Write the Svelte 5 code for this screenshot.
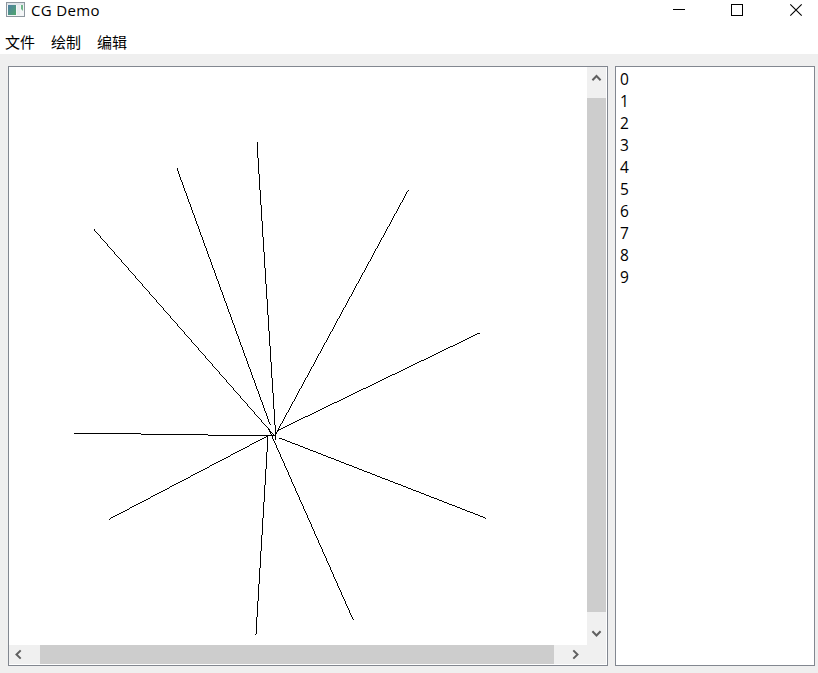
<script>
  const menus = ['文件', '绘制', '编辑'];
  const items = Array.from({ length: 10 }, (_, i) => i);

  // Segments in canvas coordinates: x1, y1, x2, y2
  const segments = [
    [248, 75, 266.95, 372],
    [168, 101, 261, 357],
    [85, 162, 266, 369],
    [399, 123, 266, 368],
    [470, 266, 269, 363],
    [476, 451, 270, 371],
    [344, 552, 260, 362],
    [246.95, 567, 259, 368],
    [100, 452, 260, 368],
    [65, 366, 266, 369]
  ];

  // DDA rasterisation keeps the strokes one pixel wide without smoothing
  function raster([x1, y1, x2, y2]) {
    const n = Math.max(Math.abs(x2 - x1), Math.abs(y2 - y1));
    let d = '';
    for (let i = 0; i <= n; i++) {
      const x = Math.floor(x1 + ((x2 - x1) * i) / n + 1e-9);
      const y = Math.floor(y1 + ((y2 - y1) * i) / n + 1e-9);
      d += `M${x} ${y}h1v1h-1z`;
    }
    return d;
  }
</script>

<div class="window">
  <header class="title">
    <svg class="logo" width="20" height="18" viewBox="0 0 20 18">
      <defs>
        <linearGradient id="pane" x1="0" y1="0" x2="1" y2="1">
          <stop offset="0" stop-color="#4f7fa5" />
          <stop offset="1" stop-color="#4fa66c" />
        </linearGradient>
      </defs>
      <rect x=".5" y=".5" width="18" height="14" fill="#f4f6f7" stroke="#8d969e" />
      <rect x="1" y="1" width="17" height="2" fill="#dfe5e9" />
      <rect x="2" y="3" width="8" height="10" fill="url(#pane)" />
      <rect x="11" y="3" width="3" height="10" fill="#e9edef" />
      <path d="M15 3h2v6l-2-2z" fill="#70b68a" />
    </svg>
    <span class="name">CG Demo</span>
    <svg class="controls" width="146" height="20" viewBox="0 0 146 20" fill="none" stroke="#000">
      <path d="M1 9.5h12M59.5 4.5h11v11h-11z" shape-rendering="crispEdges" />
      <path d="M118.3 4.3l11.4 11.4M129.7 4.3l-11.4 11.4" stroke-width="1.1" />
    </svg>
  </header>
  <nav>
    {#each menus as menu}<span>{menu}</span>{/each}
  </nav>
  <main>
    <section class="view">
      <svg class="canvas" width="578" height="578" viewBox="0 0 578 578">
        {#each segments as s}<path d={raster(s)} shape-rendering="crispEdges" />{/each}
      </svg>
      <div class="vbar">
        <svg width="19" height="31" viewBox="0 0 19 31"><path d="M5.4 13.2L9.5 9l4.1 4.2" /></svg>
        <div class="thumb"></div>
        <svg width="19" height="33" viewBox="0 0 19 33"><path d="M5.4 19.3l4.1 4.2 4.1-4.2" /></svg>
      </div>
      <div class="hbar">
        <svg width="31" height="19" viewBox="0 0 31 19"><path d="M11.7 5.4L7.5 9.5l4.2 4.1" /></svg>
        <div class="thumb"></div>
        <svg width="33" height="19" viewBox="0 0 33 19"><path d="M19.3 5.4l4.2 4.1-4.2 4.1" /></svg>
      </div>
      <div class="corner"></div>
    </section>
    <ul>
      {#each items as item}<li>{item}</li>{/each}
    </ul>
  </main>
</div>

<style>
  :global(body) {
    margin: 0;
  }
  .window {
    width: 818px;
    height: 673px;
    overflow: hidden;
    background: #fff;
    color: #000;
    display: flex;
    flex-direction: column;
    font: 15px/22px 'Open Sans', 'Noto Sans CJK SC', sans-serif;
  }
  .title {
    height: 22px;
    display: flex;
    align-items: flex-start;
    padding-left: 6px;
  }
  .logo {
    margin-top: 2px;
  }
  .name {
    margin-left: 5px;
    line-height: 21px;
    letter-spacing: 0.35px;
  }
  .controls {
    margin-left: auto;
  }
  nav {
    height: 32px;
    display: flex;
    gap: 16px;
    padding-left: 5px;
    line-height: 40px;
  }
  main {
    flex: 1;
    display: flex;
    gap: 7px;
    padding: 12px 3px 7px 8px;
    background: #efefef;
  }
  .view,
  ul {
    box-sizing: border-box;
    height: 600px;
    border: 1px solid #828790;
    background: #fff;
  }
  .view {
    width: 600px;
    display: grid;
    grid-template: 578px 19px / 578px 19px;
  }
  .canvas {
    display: block;
  }
  .vbar,
  .hbar {
    display: flex;
    background: #f0f0f0;
  }
  .vbar {
    flex-direction: column;
  }
  .vbar svg,
  .hbar svg {
    flex: none;
    fill: none;
    stroke: #606060;
    stroke-width: 2;
  }
  .thumb {
    flex: 1;
    background: #cdcdcd;
  }
  .corner {
    background: #f0f0f0;
  }
  ul {
    width: 200px;
    margin: 0;
    padding: 1px 0 0 4px;
    list-style: none;
    font-size: 15.5px;
  }
  li {
    height: 22px;
  }
</style>
